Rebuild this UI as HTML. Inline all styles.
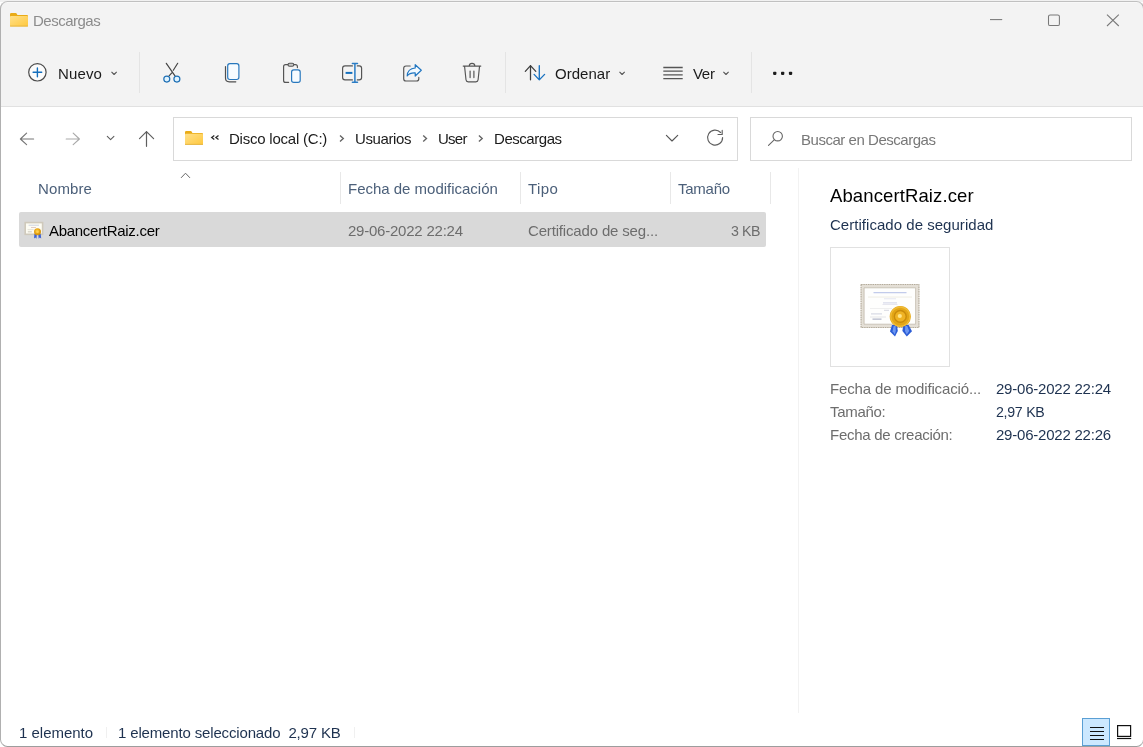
<!DOCTYPE html>
<html lang="es">
<head>
<meta charset="utf-8">
<title>Descargas</title>
<style>
*{box-sizing:border-box;margin:0;padding:0}
html,body{width:1143px;height:747px;overflow:hidden;background:#fff}
body{font-family:"Liberation Sans",sans-serif;font-size:15px;color:#1b1b1b;position:relative}
.a{position:absolute}
.t{position:absolute;white-space:nowrap;line-height:17px;height:17px;will-change:transform}
.vs{position:absolute;width:1px}
.box{position:absolute;border:1px solid #d9d9d9;background:#fff}
svg{position:absolute;left:0;top:0;overflow:visible}
.frame{position:absolute;left:0;top:1px;width:1144px;height:746px;border:1px solid #b0b0b0;border-top-color:#c0c0c0;border-bottom-color:#9d9d9d;border-radius:7.5px;pointer-events:none}
</style>
</head>
<body>
<div class="a" style="left:0;top:0;width:1143px;height:2px;background:#f1f1f1"></div>
<!-- window surface clipped to rounded rectangle -->
<div class="a" style="left:0;top:1px;width:1144px;height:746px;border-radius:7.5px;overflow:hidden;background:#fff">
  <div class="a" style="left:0;top:0;width:1144px;height:105px;background:#f3f3f3"></div>
  <div class="a" style="left:0;top:1px;width:1144px;height:1px;background:#f8f8f8"></div>
  <div class="a" style="left:0;top:105px;width:1144px;height:1px;background:#e1e1e1"></div>
</div>

<!-- toolbar separators -->
<div class="vs" style="left:139px;top:52px;height:41px;background:#e4e4e4"></div>
<div class="vs" style="left:505px;top:52px;height:41px;background:#e4e4e4"></div>
<div class="vs" style="left:751px;top:52px;height:41px;background:#e4e4e4"></div>

<!-- address + search boxes -->
<div class="box" style="left:173px;top:117px;width:565px;height:44px"></div>
<div class="box" style="left:750px;top:117px;width:382px;height:44px"></div>

<!-- column header separators -->
<div class="vs" style="left:340px;top:172px;height:32px;background:#e8e8e8"></div>
<div class="vs" style="left:520px;top:172px;height:32px;background:#e8e8e8"></div>
<div class="vs" style="left:670px;top:172px;height:32px;background:#e8e8e8"></div>
<div class="vs" style="left:770px;top:172px;height:32px;background:#e8e8e8"></div>

<!-- selected row -->
<div class="a" style="left:19px;top:212px;width:747px;height:35px;background:#d9d9d9;border-radius:2px"></div>

<!-- preview pane divider + thumbnail box -->
<div class="vs" style="left:798px;top:168px;height:545px;background:#f2f2f2"></div>
<div class="box" style="left:830px;top:247px;width:120px;height:120px;border-color:#e1e1e1"></div>

<!-- status bar -->
<div class="vs" style="left:106px;top:727px;height:11px;background:#f0f0f0"></div>
<div class="vs" style="left:354px;top:727px;height:11px;background:#f0f0f0"></div>
<div class="a" style="left:1082px;top:718px;width:28px;height:28px;background:#cce8ff;border:1px solid #5a9fd4"></div>

<div class="t" style="left:33.4px;top:12px;font-size:15px;color:#8c8c8c;letter-spacing:-0.500px">Descargas</div>
<div class="t" style="left:57.9px;top:65px;font-size:15px;color:#1b1b1b;letter-spacing:0.148px">Nuevo</div>
<div class="t" style="left:554.9px;top:65px;font-size:15px;color:#1b1b1b;letter-spacing:0.024px">Ordenar</div>
<div class="t" style="left:692.9px;top:65px;font-size:15px;color:#1b1b1b;letter-spacing:-0.305px">Ver</div>
<div class="t" style="left:229.2px;top:130px;font-size:15px;color:#1b1b1b;letter-spacing:-0.224px">Disco local (C:)</div>
<div class="t" style="left:355.0px;top:130px;font-size:15px;color:#1b1b1b;letter-spacing:-0.398px">Usuarios</div>
<div class="t" style="left:438.1px;top:130px;font-size:15px;color:#1b1b1b;letter-spacing:-0.743px">User</div>
<div class="t" style="left:493.9px;top:130px;font-size:15px;color:#1b1b1b;letter-spacing:-0.456px">Descargas</div>
<div class="t" style="left:801.3px;top:131px;font-size:15px;color:#787878;letter-spacing:-0.469px">Buscar en Descargas</div>
<div class="t" style="left:38.3px;top:180px;font-size:15px;color:#4c607a;letter-spacing:0.107px">Nombre</div>
<div class="t" style="left:348.0px;top:180px;font-size:15px;color:#4c607a;letter-spacing:-0.014px">Fecha de modificación</div>
<div class="t" style="left:527.9px;top:180px;font-size:15px;color:#4c607a;letter-spacing:0.369px">Tipo</div>
<div class="t" style="left:678.0px;top:180px;font-size:15px;color:#4c607a;letter-spacing:-0.246px">Tamaño</div>
<div class="t" style="left:49.3px;top:222px;font-size:15px;color:#000000;letter-spacing:-0.291px">AbancertRaiz.cer</div>
<div class="t" style="left:348.0px;top:222px;font-size:15px;color:#6d6d6d;letter-spacing:-0.227px">29-06-2022 22:24</div>
<div class="t" style="left:527.9px;top:222px;font-size:15px;color:#6d6d6d;letter-spacing:-0.162px">Certificado de seg...</div>
<div class="t" style="left:731.2px;top:222.5px;font-size:14.2px;color:#6d6d6d;letter-spacing:-0.466px">3 KB</div>
<div class="t" style="left:830.2px;top:187px;font-size:18.5px;color:#000000;letter-spacing:0.112px">AbancertRaiz.cer</div>
<div class="t" style="left:829.8px;top:215.5px;font-size:15px;color:#1e3250;letter-spacing:0.033px">Certificado de seguridad</div>
<div class="t" style="left:829.7px;top:380px;font-size:15px;color:#6d6d6d;letter-spacing:-0.141px">Fecha de modificació...</div>
<div class="t" style="left:829.7px;top:403px;font-size:15px;color:#6d6d6d;letter-spacing:-0.292px">Tamaño:</div>
<div class="t" style="left:829.7px;top:426px;font-size:15px;color:#6d6d6d;letter-spacing:-0.282px">Fecha de creación:</div>
<div class="t" style="left:996.2px;top:380px;font-size:15px;color:#1e3250;letter-spacing:-0.221px">29-06-2022 22:24</div>
<div class="t" style="left:996.2px;top:403.5px;font-size:14.2px;color:#1e3250;letter-spacing:-0.283px">2,97 KB</div>
<div class="t" style="left:996.2px;top:426px;font-size:15px;color:#1e3250;letter-spacing:-0.221px">29-06-2022 22:26</div>
<div class="t" style="left:18.6px;top:723.5px;font-size:15px;color:#1e3250;letter-spacing:-0.012px">1 elemento</div>
<div class="t" style="left:117.8px;top:723.5px;font-size:15px;color:#1e3250;letter-spacing:-0.155px">1 elemento seleccionado  2,97 KB</div>
<!-- all icons, drawn in page coordinates -->
<svg width="1143" height="747" viewBox="0 0 1143 747" fill="none" stroke-linecap="round" stroke-linejoin="round">
  <defs>
    <linearGradient id="fg" x1="0" y1="0" x2="1" y2="1">
      <stop offset="0" stop-color="#ffe08a"/><stop offset="1" stop-color="#ffc83d"/>
    </linearGradient>
    <radialGradient id="gold" cx="0.45" cy="0.4" r="0.6">
      <stop offset="0" stop-color="#ffd24a"/><stop offset="0.55" stop-color="#e9a615"/><stop offset="1" stop-color="#c98a0c"/>
    </radialGradient>
  </defs>

  <!-- title bar folder -->
  <g stroke="none">
    <path d="M10 14.2 Q10 13 11.2 13 H15.6 Q16.4 13 16.8 13.8 L17.4 15 H27 Q28 15 28 16 V17 H10 Z" fill="#e9ab17"/>
    <rect x="10" y="15.9" width="18" height="10.6" rx="0.9" fill="url(#fg)"/>
    <rect x="10" y="25.6" width="18" height="0.9" fill="#e3b341"/>
  </g>

  <!-- caption buttons -->
  <g stroke="#787878" stroke-width="1.05" stroke-linecap="butt">
    <path d="M990 19.6 H1002.2"/>
    <rect x="1048.5" y="14.9" width="10.9" height="10.7" rx="1.7"/>
    <path d="M1107 14.7 L1118.8 26 M1118.8 14.7 L1107 26"/>
  </g>

  <!-- Nuevo (+) -->
  <circle cx="37.4" cy="72.3" r="8.7" stroke="#4a4a4a" stroke-width="1.2" fill="#fbfbfb"/>
  <path d="M33.1 72.3 H41.7 M37.4 68 V76.7" stroke="#146fbd" stroke-width="1.4"/>
  <path d="M111.5 71.9 L114.1 74.5 L116.7 71.9" stroke="#555" stroke-width="1.1" stroke-linecap="butt"/>

  <!-- cut -->
  <path d="M166.3 63.3 L175 75.8 M177.7 63.3 L173.3 70.3 M171.8 72.8 L169.1 75.9" stroke="#444" stroke-width="1.18"/>
  <circle cx="166.8" cy="79.1" r="3" stroke="#1d6fb4" stroke-width="1.18" fill="#dff3ff"/>
  <circle cx="176.9" cy="79.1" r="3" stroke="#1d6fb4" stroke-width="1.18" fill="#dff3ff"/>

  <!-- copy -->
  <path d="M225.5 66.5 V78 Q225.5 81.8 229.3 81.8 H235.8" stroke="#4f4f4f" stroke-width="1.2"/>
  <rect x="227.7" y="63.7" width="11.2" height="15.8" rx="2.2" stroke="#2777bd" stroke-width="1.18" fill="#f6fbff"/>

  <!-- paste -->
  <path d="M297.4 67.6 V66.6 Q297.4 64.6 295.4 64.6 H285.6 Q283.6 64.6 283.6 66.6 V80.4 Q283.6 82.4 285.6 82.4 H288.6" stroke="#555" stroke-width="1.18"/>
  <rect x="288" y="63.3" width="5.8" height="3" rx="1.5" stroke="#555" stroke-width="1.1" fill="#c9c9c9"/>
  <rect x="291.6" y="69.8" width="8.6" height="12.6" rx="2.2" stroke="#2777bd" stroke-width="1.18" fill="#f6fbff"/>

  <!-- rename -->
  <path d="M352.4 65.9 H345 Q342.6 65.9 342.6 68.3 V77.5 Q342.6 79.9 345 79.9 H352.4 M357.3 65.9 H359.2 Q361.6 65.9 361.6 68.3 V77.5 Q361.6 79.9 359.2 79.9 H357.3" stroke="#555" stroke-width="1.18"/>
  <path d="M345.6 72.9 H352.4" stroke="#146fbd" stroke-width="2" stroke-linecap="butt"/>
  <path d="M354.9 63.6 V82.2 M352.4 63.5 H357.5 M352.4 82.3 H357.5" stroke="#2a7cc4" stroke-width="1.5"/>

  <!-- share -->
  <path d="M410.2 66 H406 Q403.7 66 403.7 68.3 V78.7 Q403.7 81 406 81 H416.5 Q418.8 81 418.8 78.7 V77.4" stroke="#555" stroke-width="1.18"/>
  <path d="M415.2 64.7 L421.3 70.3 L415.2 76 V72.9 C411.4 72.7 408.8 73.8 407.2 76 C407.4 71.4 410.2 68.3 415.2 68 Z" stroke="#1f75c0" stroke-width="1.18" fill="#f3faff"/>

  <!-- delete -->
  <path d="M463.2 66.1 H480.8 M469.2 66 Q469.4 63.3 472 63.3 Q474.7 63.3 474.9 66 M464.6 66.6 L466 79.8 Q466.2 81.8 468.2 81.8 H475.9 Q477.9 81.8 478.1 79.8 L479.5 66.6" stroke="#555" stroke-width="1.15"/>
  <path d="M470.1 71 V77.6 M473.9 71 V77.6" stroke="#555" stroke-width="1.18"/>

  <!-- sort -->
  <path d="M530.5 65.6 V79.8 M525.3 71.4 L530.5 65.6 L535.8 71.4" stroke="#3d3d3d" stroke-width="1.25"/>
  <path d="M539.3 65.7 V79.8 M534.1 74.4 L539.3 79.9 L544.6 74.4" stroke="#1a72c0" stroke-width="1.35"/>
  <path d="M619.5 71.9 L622.1 74.5 L624.7 71.9" stroke="#555" stroke-width="1.1" stroke-linecap="butt"/>

  <!-- view -->
  <path d="M663.3 67.5 H682.7 M663.3 71.2 H682.7 M663.3 74.9 H682.7 M663.3 78.6 H682.7" stroke="#555" stroke-width="1.3" stroke-linecap="butt"/>
  <path d="M723.4 71.9 L726 74.5 L728.6 71.9" stroke="#555" stroke-width="1.1" stroke-linecap="butt"/>

  <!-- more -->
  <g fill="#1b1b1b" stroke="none">
    <rect x="773.1" y="71.8" width="3.3" height="3.1" rx="0.8"/>
    <rect x="781" y="71.8" width="3.3" height="3.1" rx="0.8"/>
    <rect x="788.9" y="71.8" width="3.3" height="3.1" rx="0.8"/>
  </g>

  <!-- nav arrows -->
  <path d="M33.6 139 H20.4 M26.6 133.2 L20.4 139 L26.6 144.6" stroke="#767676" stroke-width="1.15"/>
  <path d="M66.2 139 H79.4 M73.2 133.2 L79.4 139 L73.2 144.6" stroke="#a9a9a9" stroke-width="1.15"/>
  <path d="M107.3 136.4 L110.6 139.6 L113.9 136.4" stroke="#5e5e5e" stroke-width="1.1"/>
  <path d="M146.5 131.6 V146.3 M139.5 138.6 L146.5 131.6 L153.6 138.6" stroke="#5e5e5e" stroke-width="1.2"/>

  <!-- address folder -->
  <g stroke="none">
    <path d="M185 132.2 Q185 131 186.2 131 H190.6 Q191.4 131 191.8 131.8 L192.4 133 H202 Q203 133 203 134 V135 H185 Z" fill="#e9ab17"/>
    <rect x="185" y="133.8" width="18" height="11" rx="0.9" fill="url(#fg)"/>
    <rect x="185" y="143.9" width="18" height="0.9" fill="#e3b341"/>
  </g>
  <!-- « and breadcrumb chevrons -->
  <path d="M214.3 135.4 L211.7 137.45 L214.3 139.5 M218.5 135.4 L215.9 137.45 L218.5 139.5" stroke="#2e2e2e" stroke-width="1.3" stroke-linecap="butt" stroke-linejoin="miter"/>
  <g stroke="#636363" stroke-width="1.35" stroke-linecap="butt" stroke-linejoin="miter">
    <path d="M340 135.6 L343.3 138.55 L340 141.5"/>
    <path d="M423.2 135.6 L426.5 138.55 L423.2 141.5"/>
    <path d="M478.9 135.6 L482.2 138.55 L478.9 141.5"/>
  </g>
  <!-- dropdown + refresh + search -->
  <path d="M666.4 135.4 L672 141 L677.7 135.4" stroke="#555" stroke-width="1.15"/>
  <path d="M720.6 132.5 A7.5 7.5 0 1 0 722.6 137.5" stroke="#5e5e5e" stroke-width="1.15"/>
  <path d="M722.2 130.4 V134.5 H718" stroke="#5e5e5e" stroke-width="1.15"/>
  <circle cx="777.7" cy="136.2" r="4.7" stroke="#666" stroke-width="1.1"/>
  <path d="M774.2 139.8 L768.5 145.4" stroke="#666" stroke-width="1.1"/>

  <!-- sort caret in header -->
  <path d="M181.3 177.6 L185.5 173.2 L189.7 177.6" stroke="#666" stroke-width="1"/>

  <!-- small certificate icon -->
  <g stroke="none">
    <rect x="24.4" y="221.8" width="19" height="13.3" fill="#cfc9bb"/>
    <rect x="26" y="223.4" width="15.8" height="10.1" fill="#fdfcf3"/>
    <rect x="28.6" y="224.8" width="10.4" height="0.7" fill="#b9c2dc"/>
    <rect x="31" y="227" width="5" height="0.7" fill="#d5b6b0"/>
    <rect x="27.6" y="229.4" width="6" height="0.7" fill="#d9d6cc"/>
    <rect x="27.8" y="231.2" width="4" height="1.2" fill="#d4d0c4"/>
    <path d="M34.4 234 L36.9 234 L36.5 238.8 L35.3 237.6 L34 238.6 Z" fill="#3f63d2"/>
    <path d="M38.2 234 L40.7 234 L41.2 238.6 L39.8 237.6 L38.7 238.8 Z" fill="#3f63d2"/>
    <circle cx="37.5" cy="231.8" r="3.5" fill="url(#gold)"/>
    <circle cx="37.5" cy="231.7" r="1.3" fill="#ffcf4a"/>
  </g>

  <!-- large certificate thumbnail -->
  <g stroke="none">
    <rect x="860.6" y="284" width="58.8" height="44" fill="#e4dfd6"/>
    <rect x="861.1" y="284.5" width="57.8" height="43" fill="none" stroke="#b3ab9c" stroke-width="1.1" stroke-dasharray="1.4 0.9" stroke-linecap="butt"/>
    <rect x="864.4" y="287.8" width="51.2" height="36.4" fill="#fefefd" stroke="#c3bcae" stroke-width="0.8"/>
    <rect x="873.5" y="292.2" width="33" height="1" fill="#b4bfe6"/>
    <rect x="868" y="296.6" width="44" height="0.9" fill="#eeece2"/>
    <rect x="884" y="298.4" width="12" height="0.8" fill="#dfe1ee"/>
    <rect x="883" y="302.4" width="14" height="1" fill="#cfd3e6"/>
    <rect x="882.5" y="304.2" width="15" height="0.8" fill="#e1e2ec"/>
    <rect x="870" y="308.2" width="22" height="0.8" fill="#ececec"/>
    <rect x="884" y="309.8" width="5" height="1" fill="#d6d7e0"/>
    <rect x="871" y="313.4" width="11" height="1" fill="#d0d3df"/>
    <rect x="870" y="316.6" width="16" height="0.8" fill="#e2e2e2"/>
    <rect x="872.5" y="318.4" width="9" height="1.5" fill="#bfc3d2"/>
    <path d="M892 325 L897 325 L897.8 331 L895 336.6 L890 331.4 Z" fill="#2b5cd6"/>
    <path d="M903.2 325 L908.6 325 L912 331.2 L906.8 336.6 L902.4 331 Z" fill="#2b5cd6"/>
    <path d="M893.6 326 L895.6 326 L895.8 331 L894.8 334.6 L892.6 331.2 Z" fill="#6c97f2"/>
    <path d="M905.2 326 L907.2 326 L909.2 331 L906.8 334.6 L905 331 Z" fill="#6c97f2"/>
    <circle cx="900.3" cy="316.6" r="10.6" fill="#e2a516"/>
    <circle cx="900.3" cy="316.6" r="9.6" fill="none" stroke="#f0bb35" stroke-width="1.4"/>
    <circle cx="900.3" cy="316.4" r="6.6" fill="#c98b0b"/>
    <circle cx="900.3" cy="316.4" r="5.2" fill="#efb324"/>
    <circle cx="899.8" cy="316" r="2.1" fill="#ffe58a"/>
  </g>

  <!-- status bar view buttons -->
  <path d="M1090 727.5 H1104 M1090 731.5 H1104 M1090 735.5 H1104 M1090 739.5 H1104" stroke="#111" stroke-width="1.1" stroke-linecap="butt"/>
  <rect x="1117.6" y="725.6" width="13" height="10.8" stroke="#111" stroke-width="1.2" stroke-linejoin="miter"/>
  <path d="M1117 738.5 H1131.2" stroke="#111" stroke-width="1.2" stroke-linecap="butt"/>
</svg>

<div class="frame"></div>
</body>
</html>
